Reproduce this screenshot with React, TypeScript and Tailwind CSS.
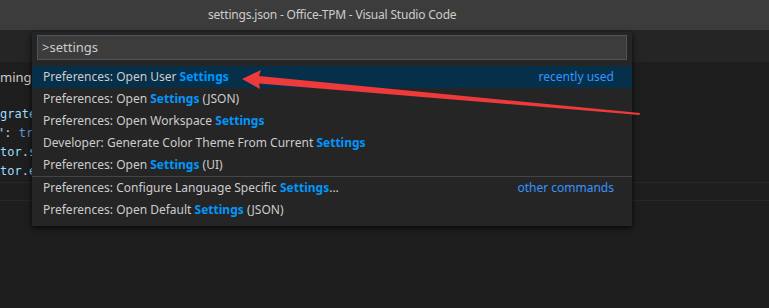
import React from "react";

const ui = { fontFamily: '"Noto Sans", "Open Sans", sans-serif' };
const mono = { fontFamily: '"DejaVu Sans Mono", "Liberation Mono", monospace' };

type Item = { pre: string; hit: string; post?: string; note?: string; active?: boolean; sep?: boolean };

const items: Item[] = [
  { pre: "Preferences: Open User ", hit: "Settings", note: "recently used", active: true },
  { pre: "Preferences: Open ", hit: "Settings", post: " (JSON)" },
  { pre: "Preferences: Open Workspace ", hit: "Settings" },
  { pre: "Developer: Generate Color Theme From Current ", hit: "Settings" },
  { pre: "Preferences: Open ", hit: "Settings", post: " (UI)" },
  { pre: "Preferences: Configure Language Specific ", hit: "Settings", post: "...", note: "other commands", sep: true },
  { pre: "Preferences: Open Default ", hit: "Settings", post: " (JSON)" },
];

function Row({ item }: { item: Item }) {
  return (
    <div
      className={
        "flex items-center h-[22px] pl-[11px] pr-[18px] text-[12px] " +
        (item.active ? "bg-[#062f4a] " : "") +
        (item.sep ? "border-t border-[#454545] h-[23px]" : "")
      }
    >
      <span className="text-[#cccccc] whitespace-pre">
        {item.pre}
        <span className="text-[#0097fb] font-bold">{item.hit}</span>
        {item.post}
      </span>
      {item.note && <span className="ml-auto text-[#3794ff]">{item.note}</span>}
    </div>
  );
}

export default function App() {
  return (
    <div className="relative w-[769px] h-[308px] overflow-hidden bg-[#1e1e1e] flex flex-col" style={ui}>
      {/* title bar */}
      <div className="h-[30px] bg-[#3c3c3c] flex items-center pl-[208px] text-[12px] tracking-[-0.2px] text-[#cccccc]">
        settings.json - Office-TPM - Visual Studio Code
      </div>
      {/* tabs */}
      <div className="h-[32px] bg-[#252526]" />
      {/* editor */}
      <div className="flex-1 relative">
        <div className="pt-[6px] text-[13px] text-[#cccccc] leading-[19px]">ming</div>
        <div className="mt-[18px] text-[12px] leading-[19px]" style={mono}>
          <div className="text-[#9cdcfe]">grate</div>
          <div className="ml-[-3px]">
            <span className="text-[#9cdcfe]">"</span>
            <span className="text-[#d4d4d4]">: </span>
            <span className="text-[#569cd6]">tr</span>
          </div>
          <div className="text-[#9cdcfe]">tor.s</div>
          <div className="text-[#9cdcfe]">tor.e</div>
        </div>
        <div className="mt-[1px] h-[19px] border-y border-[#282828]" />
      </div>

      {/* quick pick */}
      <div className="absolute left-[32px] top-[32px] w-[600px] bg-[#252526] shadow-[0_2px_6px_rgba(0,0,0,0.8)] pb-[5px]">
        <div className="px-[5px] pt-[3px] pb-[6px]">
          <div className="h-[25px] bg-[#3c3c3c] border border-[#4b5560] flex items-center pl-[4px] text-[13px] text-[#cccccc]">
            &gt;settings
          </div>
        </div>
        {items.map((it, i) => (
          <Row key={i} item={it} />
        ))}
      </div>

      {/* red arrow annotation */}
      <svg className="absolute inset-0 pointer-events-none" width="769" height="308">
        <polygon
          points="242,79 261,70 259,76 640,113 639.5,115 259,83.5 260,89"
          fill="#ee3a3a"
        />
      </svg>
    </div>
  );
}
